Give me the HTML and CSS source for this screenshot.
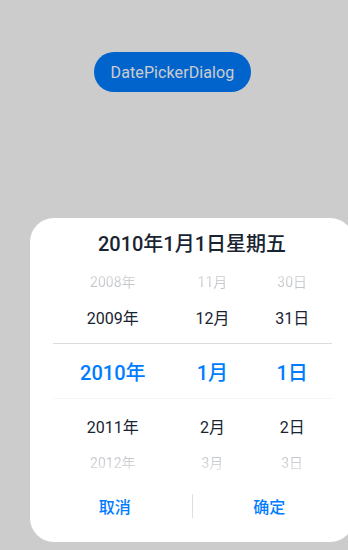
FILE: index.html
```html
<!DOCTYPE html>
<html lang="zh">
<head>
<meta charset="utf-8">
<title>DatePickerDialog</title>
<link rel="stylesheet" href="styles.css">
</head>
<body>
<main class="page">
  <button class="open-btn" type="button">DatePickerDialog</button>
</main>
<div class="mask"></div>
<section class="dialog" role="dialog">
  <h1 class="dialog-title">2010年1月1日星期五</h1>
  <div class="picker">
    <div class="row row-far row-top">
      <span class="cell year">2008年</span><span class="cell">11月</span><span class="cell">30日</span>
    </div>
    <div class="row row-near">
      <span class="cell year">2009年</span><span class="cell">12月</span><span class="cell">31日</span>
    </div>
    <div class="row row-selected">
      <span class="cell year">2010年</span><span class="cell">1月</span><span class="cell">1日</span>
    </div>
    <div class="row row-near row-after">
      <span class="cell year">2011年</span><span class="cell">2月</span><span class="cell">2日</span>
    </div>
    <div class="row row-far row-bottom">
      <span class="cell year">2012年</span><span class="cell">3月</span><span class="cell">3日</span>
    </div>
  </div>
  <div class="dialog-actions">
    <button class="action" type="button">取消</button>
    <span class="action-sep"></span>
    <button class="action" type="button">确定</button>
  </div>
</section>
</body>
</html>
```
FILE: styles.css
```css
html, body {
  margin: 0;
  padding: 0;
}
body {
  width: 348px;
  height: 550px;
  background: #ffffff;
  font-family: "Roboto", "Noto Sans CJK SC", sans-serif;
  overflow: hidden;
  position: relative;
}
.page {
  display: flex;
  justify-content: center;
  padding-top: 52px;
  padding-right: 3px;
}
.open-btn {
  height: 40px;
  padding: 0 17px;
  border: none;
  border-radius: 20px;
  background: #007dff;
  color: #ffffff;
  font-family: "Roboto", "Noto Sans CJK SC", sans-serif;
  font-size: 16px;
  font-weight: 400;
  letter-spacing: 0.1px;
}
.mask {
  position: absolute;
  inset: 0;
  background: rgba(0, 0, 0, 0.2);
}
.dialog {
  position: absolute;
  left: 30px;
  top: 218px;
  width: 324px;
  background: #ffffff;
  border-radius: 24px;
  display: flex;
  flex-direction: column;
}
.dialog-title {
  margin: 0;
  height: 53px;
  line-height: 53px;
  text-align: center;
  font-size: 20px;
  font-weight: 500;
  color: #182431;
}
.picker {
  margin: 0 22px 0 23px;
  display: flex;
  flex-direction: column;
}
.row {
  display: flex;
  align-items: center;
  color: #182431;
  font-size: 16px;
}
.cell {
  flex: 2;
  text-align: center;
}
.cell.year {
  flex: 3;
}
.row-far {
  height: 20px;
  font-size: 14px;
  color: rgba(24, 36, 49, 0.3);
}
.row-top {
  -webkit-mask-image: linear-gradient(to bottom, rgba(0,0,0,0.45), #000);
  mask-image: linear-gradient(to bottom, rgba(0,0,0,0.45), #000);
}
.row-bottom {
  height: 18px;
  -webkit-mask-image: linear-gradient(to top, rgba(0,0,0,0.45), #000);
  mask-image: linear-gradient(to top, rgba(0,0,0,0.45), #000);
}
.row-near {
  height: 52px;
}
.row-after {
  height: 54px;
}
.row-selected {
  height: 54px;
  border-top: 1px solid #dcdcdc;
  border-bottom: 1px solid #f6f6f6;
  color: #007dff;
  font-size: 20px;
  font-weight: 500;
}
.dialog-actions {
  display: flex;
  align-items: center;
  padding: 15px 8px 16px;
}
.action {
  flex: 1;
  height: 40px;
  border: none;
  background: transparent;
  color: #007dff;
  font-family: "Roboto", "Noto Sans CJK SC", sans-serif;
  font-size: 16px;
  font-weight: 500;
}
.action-sep {
  width: 1px;
  height: 24px;
  background: #dedede;
}
```
